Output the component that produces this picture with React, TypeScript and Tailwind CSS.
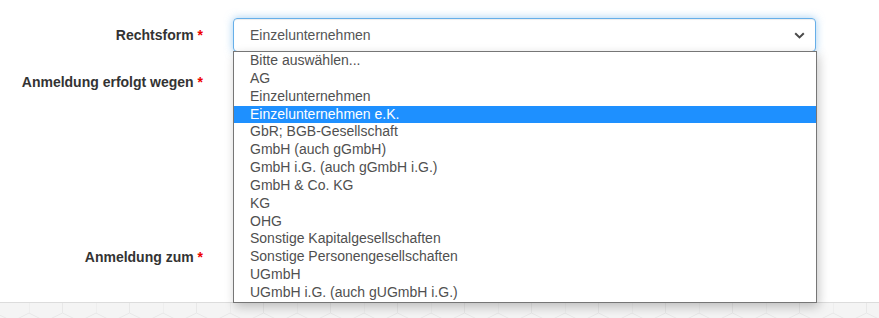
import React from "react";

const options = [
  "Bitte auswählen...",
  "AG",
  "Einzelunternehmen",
  "Einzelunternehmen e.K.",
  "GbR; BGB-Gesellschaft",
  "GmbH (auch gGmbH)",
  "GmbH i.G. (auch gGmbH i.G.)",
  "GmbH & Co. KG",
  "KG",
  "OHG",
  "Sonstige Kapitalgesellschaften",
  "Sonstige Personengesellschaften",
  "UGmbH",
  "UGmbH i.G. (auch gUGmbH i.G.)",
];

const selected = "Einzelunternehmen e.K.";

function Label({ text }: { text: string }) {
  return (
    <label className="w-[203px] shrink-0 text-right text-[14px] leading-[20px] font-bold text-[#333]">
      {text} <span className="text-[#e00]">*</span>
    </label>
  );
}

function Chevron() {
  return (
    <svg width="11" height="7" viewBox="0 0 11 7" className="text-[#4a4a4a]">
      <path d="M1.2 1.2 L5.5 5.4 L9.8 1.2" fill="none" stroke="currentColor" strokeWidth="2" />
    </svg>
  );
}

export default function App() {
  return (
    <div
      className="w-[879px] h-[318px] overflow-hidden bg-[#f4f4f4]"
      style={{ fontFamily: '"Liberation Sans", Arial, sans-serif' }}
    >
      {/* Form panel */}
      <div className="h-[303px] bg-white border-b border-[#dcdcdc] pt-[18px]">
        {/* Rechtsform */}
        <div className="flex items-center gap-[30px]">
          <Label text="Rechtsform" />
          <div className="relative w-[583px]">
            <div className="h-[34px] flex items-center justify-between pl-[16px] pr-[10px] rounded-[4px] border border-[#66afe9] shadow-[inset_0_1px_1px_rgba(0,0,0,0.075),0_0_8px_rgba(102,175,233,0.6)] text-[14px] text-[#555]">
              <span>Einzelunternehmen</span>
              <Chevron />
            </div>

            {/* Open list */}
            <ul className="absolute left-0 top-[33px] z-10 w-[584px] bg-white border border-[#767676] shadow-[2px_4px_10px_rgba(0,0,0,0.22)]">
              {options.map((o) => (
                <li
                  key={o}
                  className={
                    o === selected
                      ? "h-[17.85px] pl-[16px] text-[14px] leading-[17.85px] bg-[#1e90ff] text-white"
                      : "h-[17.85px] pl-[16px] text-[14px] leading-[17.85px] text-[#505050]"
                  }
                >
                  {o}
                </li>
              ))}
            </ul>
          </div>
        </div>

        {/* Anmeldung erfolgt wegen */}
        <div className="flex gap-[30px] mt-[13px] pt-[7px] h-[175px]">
          <Label text="Anmeldung erfolgt wegen" />
        </div>

        {/* Anmeldung zum */}
        <div className="flex gap-[30px] pt-[7px]">
          <Label text="Anmeldung zum" />
        </div>
      </div>

      {/* Background pattern */}
      <svg width="879" height="15" className="block">
        <defs>
          <pattern id="hex" width="67" height="40" patternUnits="userSpaceOnUse" x="29" y="0">
            <path
              d="M0 0 V10 M33.5 0 V10 M0 10 L-16 18 M0 10 L16 18 M33.5 10 L17 18 M33.5 10 L50 18 M67 10 L51 18"
              fill="none"
              stroke="#e8e8e8"
              strokeWidth="1"
            />
          </pattern>
        </defs>
        <rect width="879" height="15" fill="url(#hex)" />
      </svg>
    </div>
  );
}
